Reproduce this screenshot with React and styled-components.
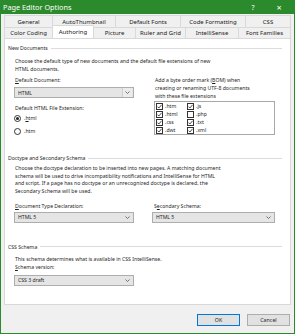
import React from "react";
import styled, { createGlobalStyle } from "styled-components";

const GlobalStyle = createGlobalStyle`
  html, body { margin: 0; padding: 0; }
  body {
    width: 295px; height: 334px; overflow: hidden; background: #f0f0f0;
    font-family: "Noto Sans", "Liberation Sans", sans-serif;
    color: #1f1f1f;
  }
  * { box-sizing: border-box; }
`;

const Window = styled.div`
  width: 295px; height: 334px;
  display: flex; flex-direction: column;
  border: 1px solid #2b8a2b; border-top: none;
  background: #f0f0f0;
`;

const TitleBar = styled.div`
  height: 14px; flex: none;
  margin: 0 -1px;
  background: #2b8a2b; color: #fff;
  display: flex; align-items: center;
  font-size: 7.3px; padding-left: 3px;
`;

const Title = styled.div`flex: 1;`;

const TitleButton = styled.div`
  width: ${(p) => p.$w}px; height: 14px;
  display: flex; align-items: center; justify-content: center;
  font-size: ${(p) => p.$size}px; color: #fff;
`;

const Body = styled.div`
  flex: 1; display: flex; flex-direction: column;
  padding: 1px 3px 0 3px; min-height: 0;
`;

const TabRow = styled.div`
  display: flex; height: ${(p) => p.$h}px;
  margin: 0 ${(p) => p.$inset}px;
  position: relative;
`;

const Tab = styled.div`
  width: ${(p) => p.$w}px; flex: none;
  display: flex; align-items: center; justify-content: center;
  font-size: 6px; color: #222;
  border: 1px solid #d9d9d9; border-bottom: none;
  margin-left: -1px;
  background: ${(p) => (p.$active ? "#fff" : "#f0f0f0")};
  ${(p) => p.$active && "height: 13px; margin-top: -2px; position: relative; z-index: 2; margin-bottom: -1px;"}
  white-space: nowrap;
`;

const Panel = styled.div`
  flex: 1; background: #fff;
  border: 1px solid #d9d9d9;
  padding: 5px 8px 0 3px;
  display: flex; flex-direction: column;
  font-size: 5.15px; line-height: 8px;
`;

const GroupHeader = styled.div`
  display: flex; align-items: center; height: 8px;
  margin-top: ${(p) => p.$mt || 0}px;
  &::after { content: ""; flex: 1; height: 1px; background: #dcdcdc; margin-left: 3px; }
`;

const GroupBody = styled.div`
  padding-left: 6px; padding-right: 7px;
  display: flex; flex-direction: column;
`;

const Para = styled.div`
  margin-top: ${(p) => p.$mt || 0}px;
  line-height: ${(p) => p.$lh || 8}px;
  padding-left: ${(p) => p.$pl ?? 1}px;
`;

const Columns = styled.div`
  display: grid; grid-template-columns: 120px 123px;
  column-gap: 18px;
  margin-top: ${(p) => p.$mt || 0}px;
`;

const Column = styled.div`
  display: flex; flex-direction: column;
`;

const Label = styled.div`
  margin-top: ${(p) => p.$mt || 0}px;
  height: 8px; padding-left: ${(p) => p.$pl ?? 1}px;
`;

const U = styled.span`text-decoration: underline;`;

const SelectBox = styled.div`
  margin-top: ${(p) => p.$mt || 0}px;
  height: 11px; border: 1px solid #adadad; background: #e5e5e5;
  display: flex; align-items: center;
  padding-left: 3px;
`;

const SelectText = styled.div`flex: 1;`;

const ArrowBox = styled.div`
  width: 10px; height: 9px; margin-right: 1px;
  display: flex; align-items: center; justify-content: center;
  border-left: ${(p) => (p.$split ? "1px solid #cfcfcf" : "none")};
  background: ${(p) => (p.$split ? "#ececec" : "transparent")};
`;

const Chevron = () => (
  <svg width="5" height="3" viewBox="0 0 5 3">
    <path d="M0.5 0.5 L2.5 2.5 L4.5 0.5" fill="none" stroke="#555" strokeWidth="0.8" />
  </svg>
);

const Select = ({ value, mt, split }) => (
  <SelectBox $mt={mt}>
    <SelectText>{value}</SelectText>
    <ArrowBox $split={split}>
      <Chevron />
    </ArrowBox>
  </SelectBox>
);

const RadioRow = styled.div`
  display: flex; align-items: center; gap: 3px;
  height: 8px; margin-top: ${(p) => p.$mt || 0}px;
`;

const RadioCircle = styled.div`
  width: 7px; height: 7px; border-radius: 50%;
  border: 1px solid #333; background: #fff;
  display: flex; align-items: center; justify-content: center;
  &::after {
    content: ""; width: 3px; height: 3px; border-radius: 50%;
    background: ${(p) => (p.$on ? "#222" : "transparent")};
  }
`;

const ListBox = styled.div`
  margin-top: 1px; height: 34px; width: 121px; margin-left: 2px;
  border: 1px solid #a8a8a8; background: #fff;
  display: grid; grid-template-columns: 31px 1fr;
  grid-auto-flow: column;
  grid-template-rows: repeat(4, 8px);
  padding-left: 1px;
`;

const CheckItem = styled.div`
  display: flex; align-items: center; gap: 2px; height: 8px;
`;

const CheckSquare = styled.div`
  width: 7px; height: 7px; border: 1px solid #333; background: #fff;
  display: flex; align-items: center; justify-content: center;
`;

const Check = ({ on, label }) => (
  <CheckItem>
    <CheckSquare>
      {on && (
        <svg width="5" height="5" viewBox="0 0 5 5">
          <path d="M0.5 2.6 L1.9 4 L4.6 0.8" fill="none" stroke="#222" strokeWidth="0.8" />
        </svg>
      )}
    </CheckSquare>
    <span>{label}</span>
  </CheckItem>
);

const Footer = styled.div`
  height: 28px; flex: none;
  display: flex; justify-content: flex-end; align-items: flex-start;
  padding: 9px 4px 0 0; gap: 7px;
`;

const Button = styled.div`
  width: 43px; height: 12px;
  border: 1px solid ${(p) => (p.$default ? "#0078d7" : "#adadad")};
  background: #e1e1e1;
  display: flex; align-items: center; justify-content: center;
  font-size: 5.3px;
`;

const tabsTop = [
  ["General", 49], ["AutoThumbnail", 64], ["Default Fonts", 66], ["Code Formatting", 66], ["CSS", 46],
];
const tabsBottom = [
  ["Color Coding", 49], ["Authoring", 42], ["Picture", 43], ["Ruler and Grid", 51], ["IntelliSense", 54], ["Font Families", 53],
];

export default function App() {
  return (
    <>
      <GlobalStyle />
      <Window>
        <TitleBar>
          <Title>Page Editor Options</Title>
          <TitleButton $w={20} $size={7}>?</TitleButton>
          <TitleButton $w={32} $size={9}>×</TitleButton>
        </TitleBar>
        <Body>
          <TabRow $h={12} $inset={1}>
            {tabsTop.map(([t, w]) => (
              <Tab key={t} $w={w}>{t}</Tab>
            ))}
          </TabRow>
          <TabRow $h={11} $inset={1}>
            {tabsBottom.map(([t, w]) => (
              <Tab key={t} $w={w} $active={t === "Authoring"}>{t}</Tab>
            ))}
          </TabRow>
          <Panel>
            <GroupHeader>New Documents</GroupHeader>
            <GroupBody>
              <Para $mt={5}>
                Choose the default type of new documents and the default file extensions of new
                <br />
                HTML documents.
              </Para>
              <Columns $mt={0}>
                <Column>
                  <Label $mt={3}><U>D</U>efault Document:</Label>
                  <Select value="HTML" mt={3} split />
                  <Label $mt={6}>Default HTML File Extension:</Label>
                  <RadioRow $mt={2}>
                    <RadioCircle $on />
                    <span>.<U>h</U>tml</span>
                  </RadioRow>
                  <RadioRow $mt={5}>
                    <RadioCircle />
                    <span>.htm</span>
                  </RadioRow>
                </Column>
                <Column>
                  <Para $mt={3} $pl={3}>
                    Add a byte order mark (<U>B</U>OM) when
                    <br />
                    creating or renaming UTF-8 documents
                    <br />
                    with these file extensions
                  </Para>
                  <ListBox>
                    <Check on label=".htm" />
                    <Check on label=".html" />
                    <Check on label=".css" />
                    <Check on label=".dwt" />
                    <Check on label=".js" />
                    <Check label=".php" />
                    <Check on label=".txt" />
                    <Check on label=".xml" />
                  </ListBox>
                </Column>
              </Columns>
            </GroupBody>

            <GroupHeader $mt={19}>Doctype and Secondary Schema</GroupHeader>
            <GroupBody>
              <Para $mt={3} $lh={7.7}>
                Choose the doctype declaration to be inserted into new pages. A matching document
                <br />
                schema will be used to drive incompatibility notifications and IntelliSense for HTML
                <br />
                and script. If a page has no doctype or an unrecognized doctype is declared, the
                <br />
                Secondary Schema will be used.
              </Para>
              <Columns $mt={6}>
                <Column>
                  <Label><U>D</U>ocument Type Declaration:</Label>
                  <Select value="HTML 5" mt={2} />
                </Column>
                <Column>
                  <Label $pl={2}>S<U>e</U>condary Schema:</Label>
                  <Select value="HTML 5" mt={2} />
                </Column>
              </Columns>
            </GroupBody>

            <GroupHeader $mt={20}>CSS Schema</GroupHeader>
            <GroupBody>
              <Para $mt={4}>This schema determines what is available in CSS IntelliSense.</Para>
              <Columns>
                <Column>
                  <Label><U>S</U>chema version:</Label>
                  <Select value="CSS 3 draft" mt={4} />
                </Column>
              </Columns>
            </GroupBody>
          </Panel>
        </Body>
        <Footer>
          <Button $default>OK</Button>
          <Button>Cancel</Button>
        </Footer>
      </Window>
    </>
  );
}
